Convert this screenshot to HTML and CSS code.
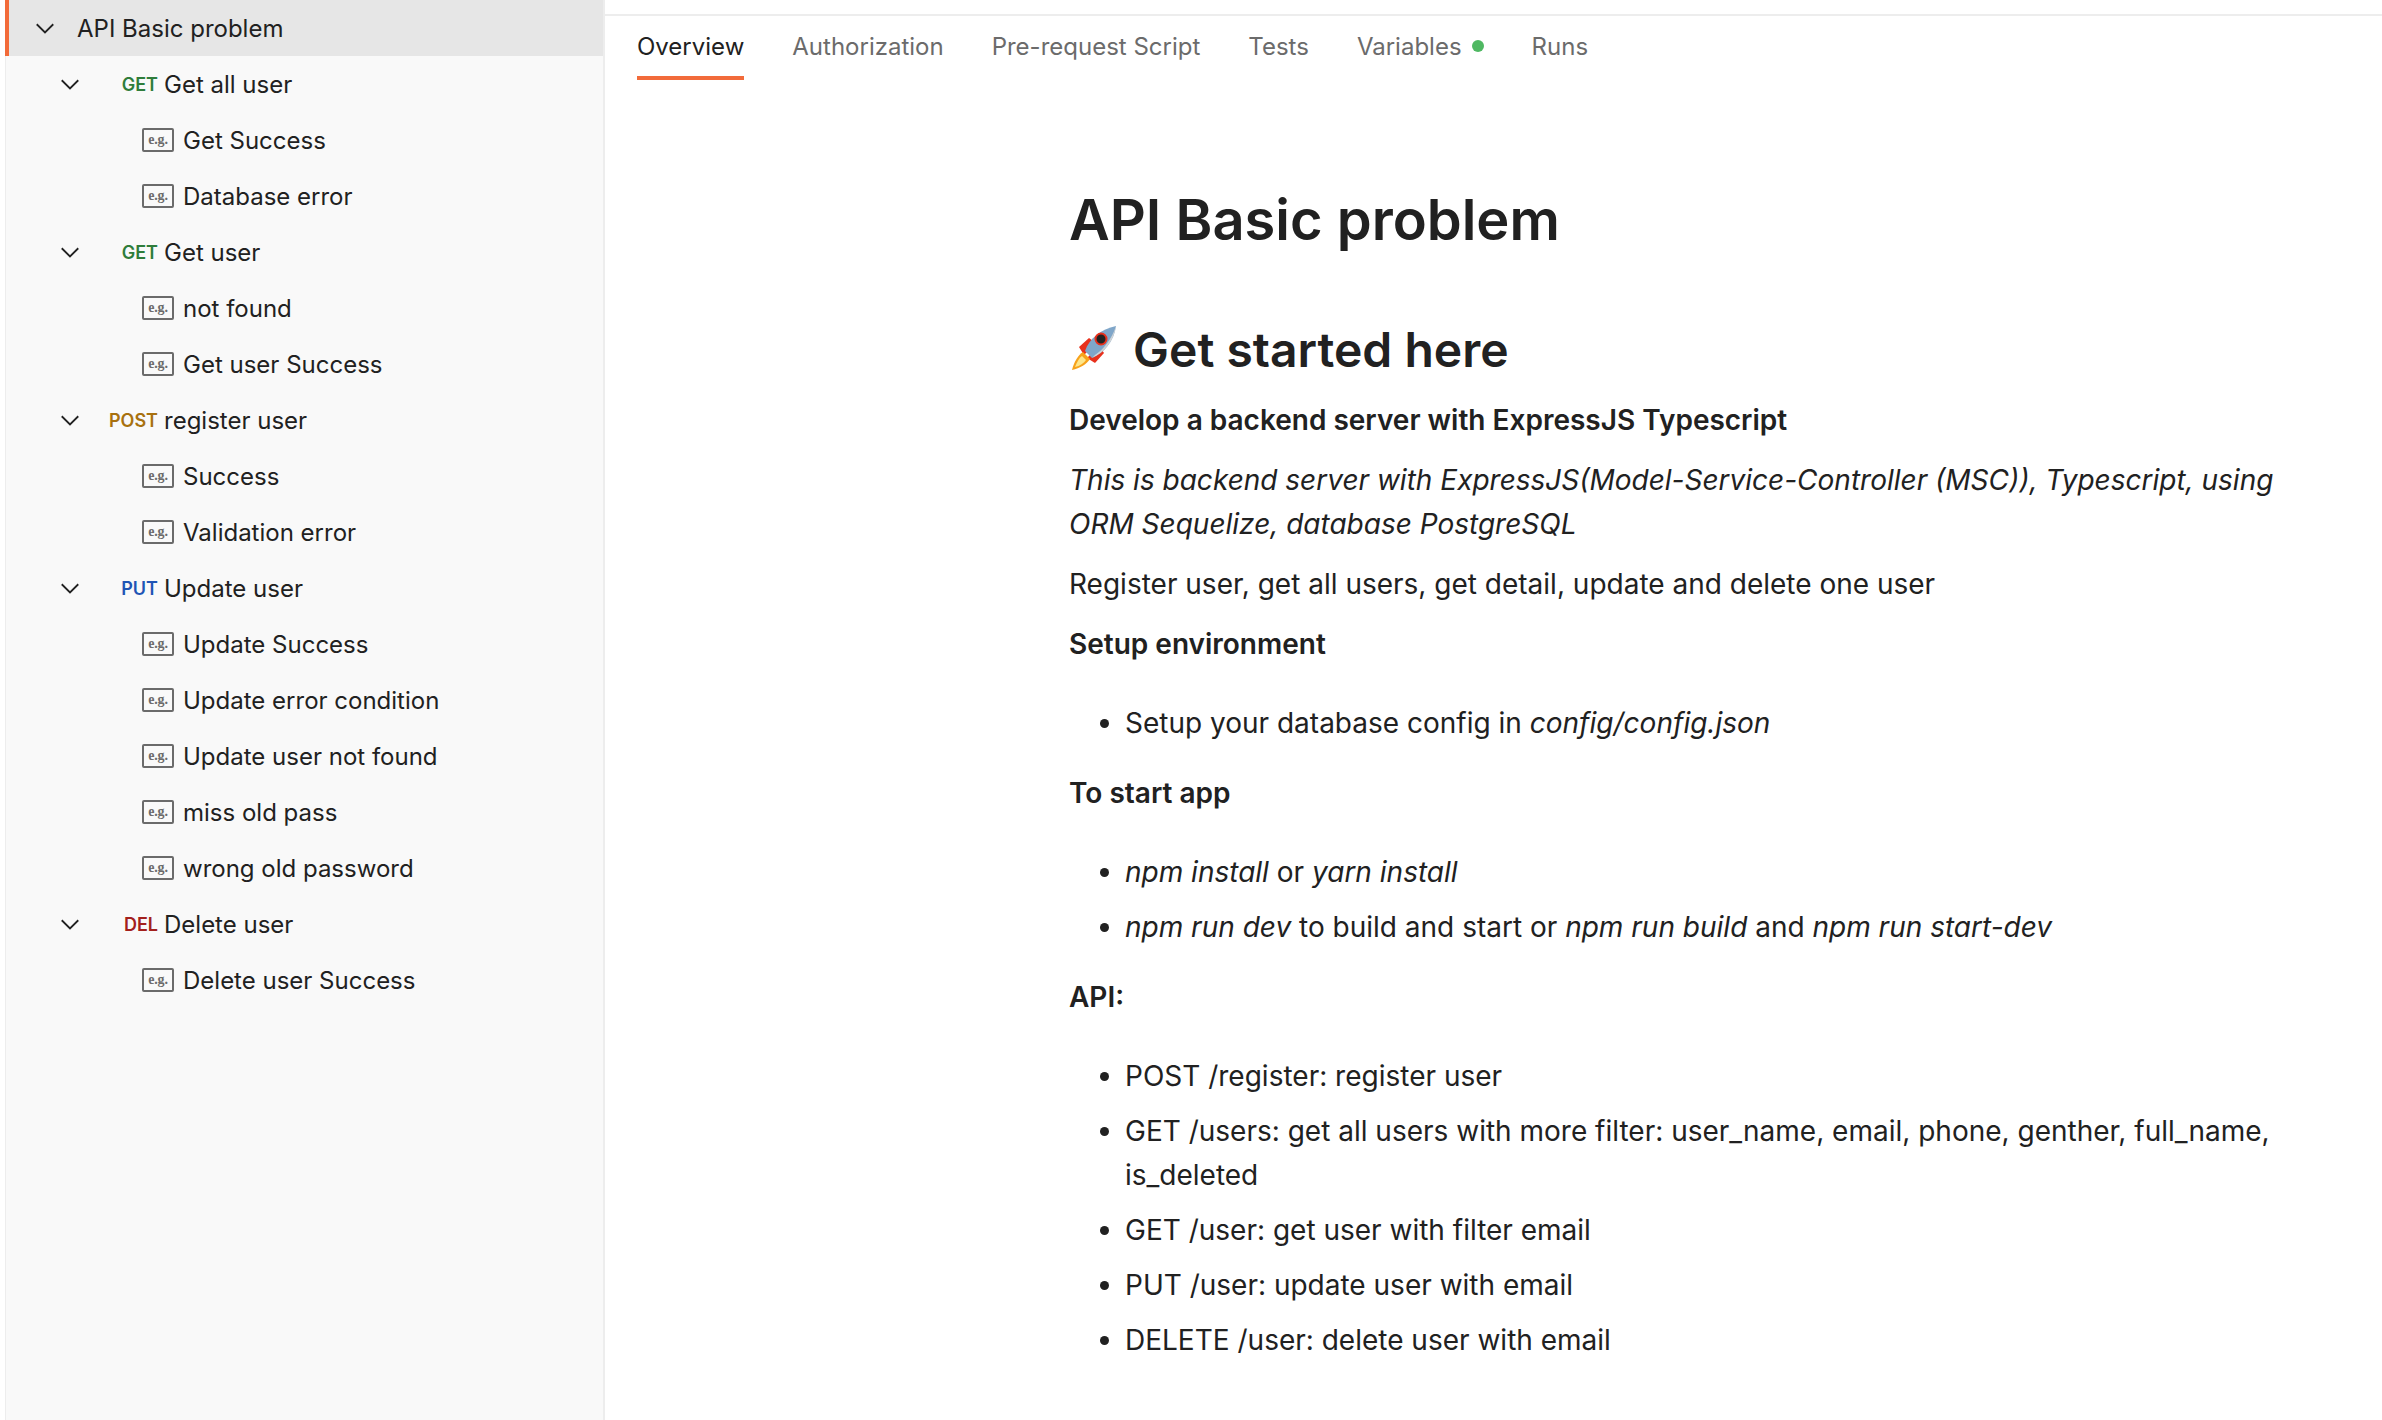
FILE: index.html
```html
<!DOCTYPE html>
<html lang="en">
<head>
  <meta charset="UTF-8" />
  <title>API Basic problem</title>
  <link rel="stylesheet" href="styles.css">
</head>
<body>

<aside class="sidebar">
  <div class="row folder active">
    <svg class="chevron" viewBox="0 0 16 16"><path d="M2.5 5.5 8 11l5.5-5.5"/></svg>
    <span>API Basic problem</span>
  </div>

  <div class="row request">
    <svg class="chevron" viewBox="0 0 16 16"><path d="M2.5 5.5 8 11l5.5-5.5"/></svg>
    <span class="method get">GET</span><span>Get all user</span>
  </div>
  <div class="row example"><span class="eg">e.g.</span><span>Get Success</span></div>
  <div class="row example"><span class="eg">e.g.</span><span>Database error</span></div>

  <div class="row request">
    <svg class="chevron" viewBox="0 0 16 16"><path d="M2.5 5.5 8 11l5.5-5.5"/></svg>
    <span class="method get">GET</span><span>Get user</span>
  </div>
  <div class="row example"><span class="eg">e.g.</span><span>not found</span></div>
  <div class="row example"><span class="eg">e.g.</span><span>Get user Success</span></div>

  <div class="row request">
    <svg class="chevron" viewBox="0 0 16 16"><path d="M2.5 5.5 8 11l5.5-5.5"/></svg>
    <span class="method post">POST</span><span>register user</span>
  </div>
  <div class="row example"><span class="eg">e.g.</span><span>Success</span></div>
  <div class="row example"><span class="eg">e.g.</span><span>Validation error</span></div>

  <div class="row request">
    <svg class="chevron" viewBox="0 0 16 16"><path d="M2.5 5.5 8 11l5.5-5.5"/></svg>
    <span class="method put">PUT</span><span>Update user</span>
  </div>
  <div class="row example"><span class="eg">e.g.</span><span>Update Success</span></div>
  <div class="row example"><span class="eg">e.g.</span><span>Update error condition</span></div>
  <div class="row example"><span class="eg">e.g.</span><span>Update user not found</span></div>
  <div class="row example"><span class="eg">e.g.</span><span>miss old pass</span></div>
  <div class="row example"><span class="eg">e.g.</span><span>wrong old password</span></div>

  <div class="row request">
    <svg class="chevron" viewBox="0 0 16 16"><path d="M2.5 5.5 8 11l5.5-5.5"/></svg>
    <span class="method del">DEL</span><span>Delete user</span>
  </div>
  <div class="row example"><span class="eg">e.g.</span><span>Delete user Success</span></div>
</aside>

<main class="main">
  <nav class="tabs">
    <span class="tab selected">Overview</span>
    <span class="tab">Authorization</span>
    <span class="tab">Pre-request Script</span>
    <span class="tab">Tests</span>
    <span class="tab">Variables <i class="dot"></i></span>
    <span class="tab">Runs</span>
  </nav>

  <article class="docs">
    <h1>API Basic problem</h1>
    <h2>
      <svg class="rocket" viewBox="0 0 48 48">
        <path d="M10 22 20 13l7 5-12 12z" fill="#e8301c"/>
        <path d="M26 38l9-10-5-7-12 12z" fill="#e8301c"/>
        <path d="M14 27c-5 3-9 10-11 18 8-2 15-6 18-11z" fill="#f7a21b"/>
        <path d="M13 31c-3 2-5 6-7 11 5-1 9-4 11-7z" fill="#fde68a"/>
        <path d="M16 26C20 14 32 4 47 1c-2 15-12 27-24 32z" fill="#7fa6c9"/>
        <path d="M26 30C34 25 43 14 47 1c-2 15-12 27-24 32z" fill="#cfd3d6"/>
        <circle cx="32" cy="14" r="5.5" fill="#222" stroke="#e8301c" stroke-width="2"/>
      </svg>
      Get started here
    </h2>
    <p><strong>Develop a backend server with ExpressJS Typescript</strong></p>
    <p><em>This is backend server with ExpressJS(Model-Service-Controller (MSC)), Typescript, using ORM Sequelize, database PostgreSQL</em></p>
    <p>Register user, get all users, get detail, update and delete one user</p>
    <p><strong>Setup environment</strong></p>
    <ul>
      <li>Setup your database config in <em>config/config.json</em></li>
    </ul>
    <p><strong>To start app</strong></p>
    <ul>
      <li><em>npm install</em> or <em>yarn install</em></li>
      <li><em>npm run dev</em> to build and start or <em>npm run build</em> and <em>npm run start-dev</em></li>
    </ul>
    <p><strong>API:</strong></p>
    <ul>
      <li>POST /register: register user</li>
      <li>GET /users: get all users with more filter: user_name, email, phone, genther, full_name, is_deleted</li>
      <li>GET /user: get user with filter email</li>
      <li>PUT /user: update user with email</li>
      <li>DELETE /user: delete user with email</li>
    </ul>
  </article>
</main>

</body>
</html>
```

FILE: styles.css
```css
html, body {
  height: 100%;
}
body {
  margin: 0;
  display: flex;
  height: 1420px;
  overflow: hidden;
  background: #fff;
  color: #212121;
  font-family: "Inter", "Liberation Sans", sans-serif;
}

/* sidebar */
.sidebar {
  width: 597px;
  margin-left: 5px;
  background: #f9f9f9;
  border-left: 1px solid #ededed;
  border-right: 2px solid #ededed;
  font-size: 24px;
  flex-shrink: 0;
}
.row {
  height: 56px;
  display: flex;
  align-items: center;
}
.row span:last-child {
  white-space: nowrap;
}
.chevron {
  width: 24px;
  height: 24px;
  flex-shrink: 0;
  fill: none;
  stroke: #212121;
  stroke-width: 1.2;
}
.folder {
  background: #e6e6e6;
  border-left: 4px solid #f26b3a;
  padding-left: 24px;
  gap: 20px;
  margin-left: -1px;
}
.request {
  padding-left: 52px;
}
.method {
  width: 76px;
  margin-right: 6px;
  text-align: right;
  font-size: 18px;
  font-weight: 600;
}
.get { color: #2f7d3b; }
.post { color: #a8710f; }
.put { color: #1f55b5; }
.del { color: #a3201c; }
.example {
  padding-left: 136px;
  gap: 9px;
}
.eg {
  box-sizing: border-box;
  width: 32px;
  height: 24px;
  display: flex;
  align-items: center;
  justify-content: center;
  border: 2px solid #6b6b6b;
  border-radius: 2px;
  color: #6b6b6b;
  font-family: "Liberation Serif", serif;
  font-weight: 700;
  font-size: 14px;
  letter-spacing: -0.2px;
}

/* main */
.main {
  flex: 1;
  min-width: 0;
}
.tabs {
  margin-top: 14px;
  height: 66px;
  border-top: 2px solid #ededed;
  padding-left: 32px;
  display: flex;
  gap: 48px;
  font-size: 24px;
  color: #6b6b6b;
}
.tab {
  box-sizing: border-box;
  height: 64px;
  display: flex;
  align-items: center;
  gap: 10px;
  padding-bottom: 4px;
  white-space: nowrap;
}
.tab.selected {
  color: #212121;
  border-bottom: 4px solid #f26b3a;
  padding-bottom: 0;
}
.dot {
  width: 12px;
  height: 12px;
  border-radius: 50%;
  background: #4fb862;
}

.docs {
  padding: 102px 80px 0 464px;
  font-size: 28px;
  line-height: 44px;
}
h1 {
  margin: 0;
  font-size: 56px;
  line-height: 72px;
  font-weight: 600;
}
h2 {
  margin: 62px 0 0;
  font-size: 48px;
  line-height: 64px;
  font-weight: 600;
}
.rocket {
  width: 48px;
  height: 48px;
  vertical-align: -6px;
  margin-right: 4px;
}
p {
  margin: 16px 0;
}
strong {
  font-weight: 600;
}
ul {
  margin: 35px 0 26px;
  padding-left: 56px;
}
li {
  margin-bottom: 11px;
}
```
